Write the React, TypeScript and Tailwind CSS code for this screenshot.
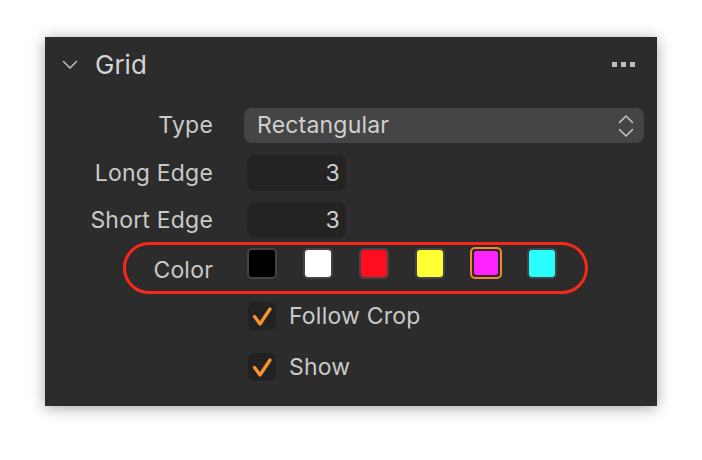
import React from "react";

const font = { fontFamily: "Inter, 'Liberation Sans', sans-serif" };

function Check() {
  return (
    <div className="w-[28px] h-[28px] rounded-[6px] bg-[#222222] flex items-center justify-center shrink-0">
      <svg width="28" height="28" viewBox="0 0 28 28" fill="none">
        <path d="M6.5 14.5 L12 22 L22 7" stroke="#f7932f" strokeWidth="3.3" strokeLinecap="round" strokeLinejoin="round" />
      </svg>
    </div>
  );
}

export default function App() {
  const swatches = [
    { c: "#000000", sel: false },
    { c: "#ffffff", sel: false },
    { c: "#ff0d1f", sel: false },
    { c: "#ffff33", sel: false },
    { c: "#ff22ff", sel: true },
    { c: "#2affff", sel: false },
  ];
  return (
    <div className="w-[702px] h-[460px] bg-white pt-[37px] pl-[45px]" style={font}>
      <div className="w-[612px] h-[369px] bg-[#2c2c2c] shadow-[0_2px_14px_rgba(0,0,0,0.35)] relative text-[#c9c9c9]">
        {/* header */}
        <div className="h-[54px] flex items-center pt-[1px]">
          <svg className="ml-[17px]" width="16" height="10" viewBox="0 0 16 10" fill="none">
            <path d="M1.5 1.5 L8 8 L14.5 1.5" stroke="#bdbdbd" strokeWidth="1.6" strokeLinecap="round" strokeLinejoin="round" />
          </svg>
          <span className="ml-[17px] text-[26px] text-[#d4d4d4] leading-none">Grid</span>
          <div className="ml-auto mr-[22px] flex gap-[4px]">
            <div className="w-[5px] h-[5px] bg-[#bdbdbd]" />
            <div className="w-[5px] h-[5px] bg-[#bdbdbd]" />
            <div className="w-[5px] h-[5px] bg-[#bdbdbd]" />
          </div>
        </div>

        <div className="grid grid-cols-[168px_1fr] gap-x-[31px] items-center text-[23px] tracking-[0.2px] mt-[17px]">
          {/* Type */}
          <div className="text-right h-[35px] leading-[35px]">Type</div>
          <div className="h-[35px] mr-[13px] rounded-[8px] bg-[#454545] flex items-center pl-[13px] pr-[10px]">
            <span className="text-[#d0d0d0]">Rectangular</span>
            <svg className="ml-auto" width="16" height="24" viewBox="0 0 16 24" fill="none">
              <path d="M1.5 8.5 L8 2 L14.5 8.5" stroke="#c4c4c4" strokeWidth="1.6" strokeLinecap="round" strokeLinejoin="round" />
              <path d="M1.5 15.5 L8 22 L14.5 15.5" stroke="#c4c4c4" strokeWidth="1.6" strokeLinecap="round" strokeLinejoin="round" />
            </svg>
          </div>

          {/* Long edge */}
          <div className="text-right h-[36px] leading-[36px] mt-[12px]">Long Edge</div>
          <div className="mt-[12px] ml-[3px] w-[99px] h-[36px] rounded-[8px] bg-[#232323] flex items-center justify-end pr-[6px] text-[#d0d0d0]">3</div>

          {/* Short edge */}
          <div className="text-right h-[36px] leading-[36px] mt-[11px]">Short Edge</div>
          <div className="mt-[11px] ml-[3px] w-[99px] h-[36px] rounded-[8px] bg-[#232323] flex items-center justify-end pr-[6px] text-[#d0d0d0]">3</div>

          {/* Color */}
          <div className="text-right h-[32px] leading-[32px] mt-[9px] pt-[7px]">Color</div>
          <div className="mt-[9px] ml-[3px] flex gap-[26px] items-center">
            {swatches.map((s, i) => (
              <div
                key={i}
                className={
                  s.sel
                    ? "w-[32px] h-[32px] -mx-[1px] rounded-[5px] border-[2px] border-[#f2882e] p-[2px] bg-[#2c2c2c]"
                    : "w-[30px] h-[31px] rounded-[5px] border-[2px] border-[#444444]"
                }
              >
                <div className="w-full h-full rounded-[3px]" style={{ background: s.c }} />
              </div>
            ))}
          </div>

          {/* Follow Crop */}
          <div className="mt-[20px]" />
          <div className="mt-[20px] ml-[4px] flex items-center gap-[13px]">
            <Check />
            <span>Follow Crop</span>
          </div>

          {/* Show */}
          <div className="mt-[16px]" />
          <div className="mt-[16px] ml-[4px] flex items-center gap-[13px]">
            <Check />
            <span>Show</span>
          </div>
        </div>

        {/* annotation outline */}
        <div className="absolute left-[78px] top-[205px] w-[465px] h-[52px] rounded-full border-[3px] border-[#fa2818]" />
      </div>
    </div>
  );
}
